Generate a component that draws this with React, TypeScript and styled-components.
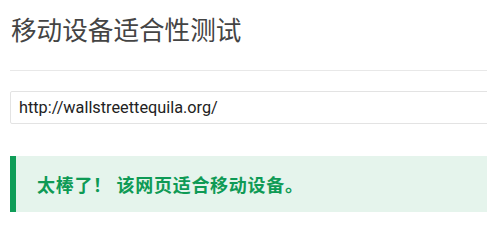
import styled, { createGlobalStyle } from 'styled-components';

const GlobalStyle = createGlobalStyle`
    html, body {
        margin: 0;
        padding: 0;
        background: #ffffff;
        overflow: hidden;
    }
    body {
        font-family: Roboto, "Noto Sans CJK SC", sans-serif;
    }
`

const Page = styled.div`
    width: 560px;
    height: 212px;
    overflow: hidden;
    padding: 10px 0 0 10px;
    box-sizing: border-box;
`

const Title = styled.h1`
    margin: 0 0 0 1px;
    font-family: "Noto Sans CJK SC", sans-serif;
    font-weight: 400;
    font-size: 25.6px;
    line-height: 37px;
    color: #444444;
`

const Divider = styled.hr`
    margin: 23px 0 0 0;
    border: none;
    border-top: 1px solid #e8e8e8;
    height: 0;
`

const UrlInput = styled.div`
    margin-top: 20px;
    height: 33px;
    box-sizing: border-box;
    border: 1px solid #e3e3e3;
    border-radius: 2px;
    padding: 0 8px;
    display: flex;
    align-items: center;
    font-family: Roboto, "Liberation Sans", sans-serif;
    font-size: 16.3px;
    color: #222222;
`

const Result = styled.div<{ accent: string; tint: string }>`
    margin-top: 32px;
    height: 70px;
    border-left: 6px solid ${(p) => p.accent};
    background: ${(p) => p.tint};
    padding: 16px 0 0 21px;
    box-sizing: border-box;
`

const ResultText = styled.p<{ accent: string }>`
    margin: 0;
    font-family: "Noto Sans CJK SC", sans-serif;
    font-weight: 700;
    font-size: 18px;
    line-height: 24px;
    letter-spacing: 0.7px;
    color: ${(p) => p.accent};
`

export default function App() {
    return (
        <>
            <GlobalStyle />
            <Page>
                <Title>移动设备适合性测试</Title>
                <Divider />
                <UrlInput>http://wallstreettequila.org/</UrlInput>
                <Result accent='#0f9d58' tint='#e5f4ec'>
                    <ResultText accent='#0e9a55'>太棒了！ 该网页适合移动设备。</ResultText>
                </Result>
            </Page>
        </>
    )
}
